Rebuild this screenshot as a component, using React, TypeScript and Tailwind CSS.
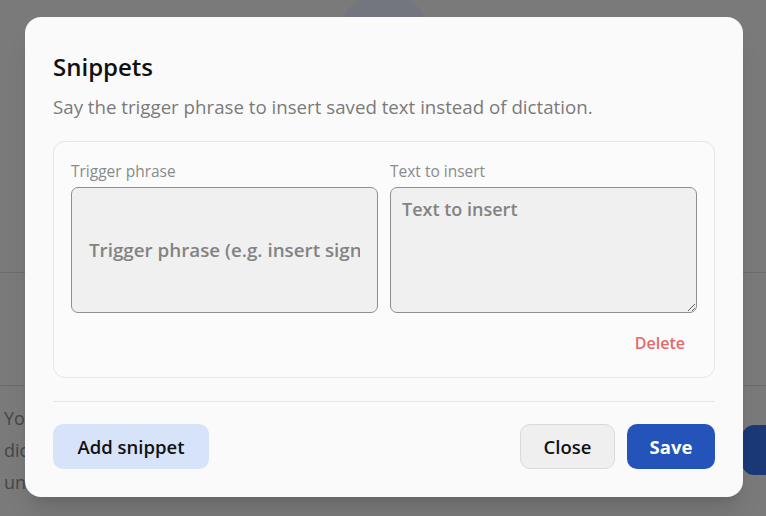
import React from "react";

export default function App() {
  return (
    <div
      className="relative w-[766px] h-[516px] overflow-hidden bg-[#f4f4f4]"
      style={{ fontFamily: "'Open Sans', 'Noto Sans', sans-serif" }}
    >
      {/* Background page */}
      <div className="flex flex-col">
        <div className="ml-[339px] mt-[-8px] w-[90px] h-[90px] rounded-full bg-[#e6ecff]" />
        <div className="mt-[190px] h-px w-full bg-[#d8d8d8]" />
        <div className="h-[112px]" />
        <div className="h-px w-full bg-[#d8d8d8]" />
        <div className="flex w-[900px] items-start pt-[16px]">
          <p className="w-[742px] shrink-0 pl-[4px] text-[18px] leading-[32px] text-[#8e8e8e]">
            You can add snippets to replace your
            <br />
            dictation with saved text, so phrases
            <br />
            unlock reusable content anywhere.
          </p>
          <div className="mt-[23px] h-[50px] w-[120px] shrink-0 rounded-[12px] bg-[#3672ee]" />
        </div>
      </div>

      {/* Overlay + modal */}
      <div className="absolute inset-0 flex items-start bg-black/50 pt-[17px] pl-[25px]">
        <div className="w-[718px] rounded-[16px] bg-[#fafafa] px-[28px] pt-[34px] pb-[28px] shadow-xl">
          <h2 className="text-[24px] leading-[32px] font-semibold text-[#111]">Snippets</h2>
          <p className="mt-[12px] text-[18.7px] leading-[24px] text-[#7a7a7a]">
            Say the trigger phrase to insert saved text instead of dictation.
          </p>

          <div className="mt-[22px] rounded-[12px] border border-[#e6e6e6] bg-[#fbfbfb] px-[17px] pt-[19px] pb-[18px]">
            <div className="grid grid-cols-2 gap-[12px]">
              <div className="flex flex-col">
                <label className="mb-[6px] text-[15.5px] leading-[20px] text-[#8a8a8a]">Trigger phrase</label>
                <input
                  className="h-[126px] w-full rounded-[7px] border border-[#8f8f8f] bg-[#f0f0f0] px-[17px] text-[18.8px] font-semibold text-[#333] outline-none placeholder:text-[#838383]"
                  placeholder="Trigger phrase (e.g. insert signature)"
                />
              </div>
              <div className="flex flex-col">
                <label className="mb-[6px] text-[15.5px] leading-[20px] text-[#8a8a8a]">Text to insert</label>
                <textarea
                  className="h-[126px] w-full resize-y rounded-[7px] border border-[#8f8f8f] bg-[#f0f0f0] px-[11px] pt-[7px] text-[18px] leading-[28px] font-semibold text-[#333] outline-none placeholder:text-[#838383]"
                  placeholder="Text to insert"
                />
              </div>
            </div>
            <div className="mt-[14px] flex justify-end">
              <button className="h-[32px] px-[12px] text-[16px] font-semibold text-[#e5686a]">Delete</button>
            </div>
          </div>

          <div className="mt-[23px] h-px w-full bg-[#e6e6e6]" />

          <div className="mt-[22px] flex items-center">
            <button className="h-[45px] w-[156px] rounded-[10px] bg-[#d7e3f8] text-[18.5px] font-semibold text-[#111]">
              Add snippet
            </button>
            <div className="ml-auto flex gap-[12px]">
              <button className="h-[45px] w-[95px] rounded-[10px] border border-[#dadada] bg-[#efefef] text-[18.5px] font-semibold text-[#111]">
                Close
              </button>
              <button className="h-[45px] w-[88px] rounded-[10px] bg-[#2453b9] text-[18.5px] font-bold text-white">
                Save
              </button>
            </div>
          </div>
        </div>
      </div>
    </div>
  );
}
